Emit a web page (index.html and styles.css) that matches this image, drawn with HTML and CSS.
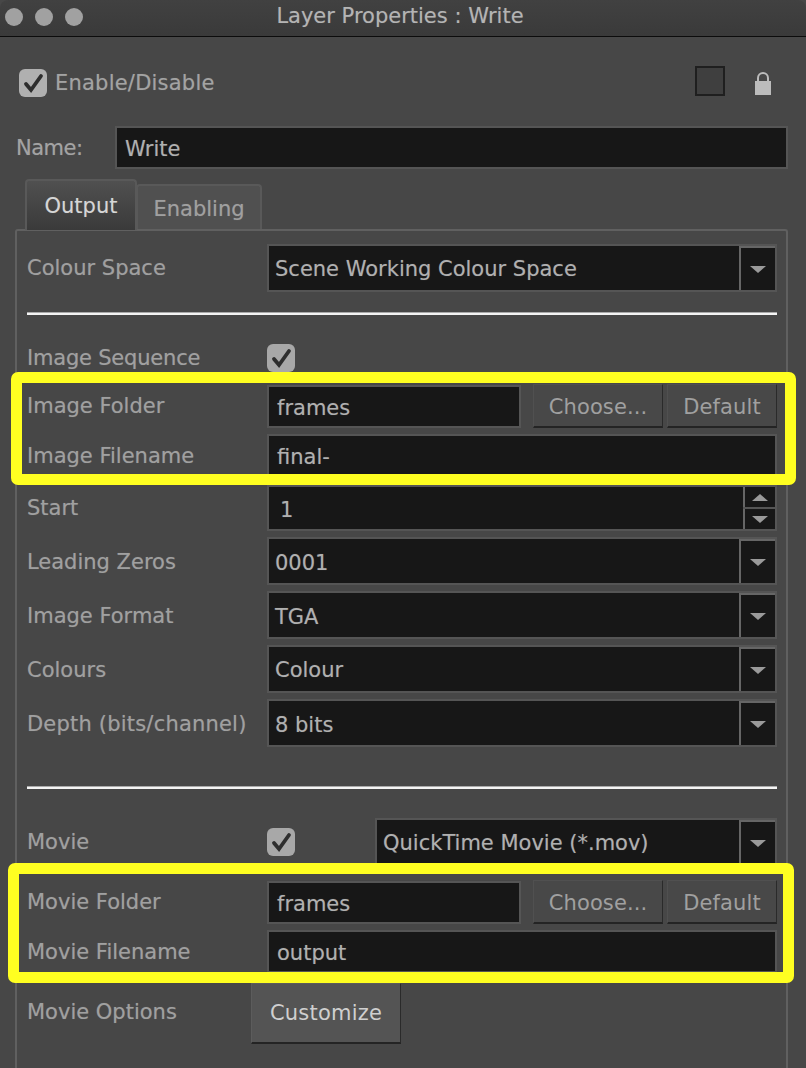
FILE: index.html
```html
<!DOCTYPE html>
<html lang="en">
<head>
<meta charset="utf-8">
<title>Layer Properties : Write</title>
<link rel="stylesheet" href="styles.css">
</head>
<body>
<div class="window">
  <header class="titlebar">
    <div class="lights"><span class="light"></span><span class="light"></span><span class="light"></span></div>
    <div class="title">Layer Properties : Write</div>
  </header>
  <div class="enable-row">
    <span class="check check-main"><svg viewBox="0 0 28 28"><path d="M7 15 L12 21 L22 7" fill="none" stroke="#2e2e2e" stroke-width="3.8" stroke-linecap="round"/></svg></span>
    <span class="enable-label">Enable/Disable</span>
    <span class="colour-swatch"></span>
    <svg class="lock" viewBox="0 0 18 24"><path d="M4 11 V7 a5 5 0 0 1 10 0 V11" fill="none" stroke="#bcbcbc" stroke-width="2"/><rect x="1" y="10" width="16" height="14" fill="#bcbcbc"/></svg>
  </div>
  <div class="name-row">
    <span class="name-label">Name:</span>
    <div class="field name-field">Write</div>
  </div>
  <div class="tabs">
    <div class="tab tab-active">Output</div>
    <div class="tab tab-idle">Enabling</div>
  </div>
  <section class="panel">
    <div class="row row-select">
      <span class="label">Colour Space</span>
      <div class="field combo combo-high"><span class="combo-text">Scene Working Colour Space</span><span class="arrow"><i class="tri-down"></i></span></div>
    </div>
    <div class="rule rule-first"></div>
    <div class="row row-check">
      <span class="label label-tight">Image Sequence</span>
      <span class="check"><svg viewBox="0 0 28 28"><path d="M7 15 L12 21 L22 7" fill="none" stroke="#2e2e2e" stroke-width="3.8" stroke-linecap="round"/></svg></span>
    </div>
    <div class="group group-image">
      <div class="row row-path">
        <span class="label">Image Folder</span>
        <div class="field path">frames</div>
        <button class="btn btn-choose">Choose...</button>
        <button class="btn btn-default">Default</button>
      </div>
      <div class="row row-file">
        <span class="label">Image Filename</span>
        <div class="field wide">final-</div>
      </div>
      <div class="marker marker-image"></div>
    </div>
    <div class="row row-start">
      <span class="label">Start</span>
      <div class="field combo"><span class="combo-text start-text">1</span>
        <span class="spin"><span class="spin-btn"><i class="tri-up"></i></span><span class="spin-btn"><i class="tri-down"></i></span></span>
      </div>
    </div>
    <div class="row row-select row-gap">
      <span class="label">Leading Zeros</span>
      <div class="field combo"><span class="combo-text">0001</span><span class="arrow"><i class="tri-down"></i></span></div>
    </div>
    <div class="row row-select row-gap">
      <span class="label">Image Format</span>
      <div class="field combo"><span class="combo-text">TGA</span><span class="arrow"><i class="tri-down"></i></span></div>
    </div>
    <div class="row row-select row-gap">
      <span class="label">Colours</span>
      <div class="field combo combo-high"><span class="combo-text">Colour</span><span class="arrow"><i class="tri-down"></i></span></div>
    </div>
    <div class="row row-select row-gap">
      <span class="label label-wide">Depth (bits/channel)</span>
      <div class="field combo"><span class="combo-text">8 bits</span><span class="arrow"><i class="tri-down"></i></span></div>
    </div>
    <div class="rule rule-second"></div>
    <div class="row row-movie">
      <span class="label">Movie</span>
      <span class="check"><svg viewBox="0 0 28 28"><path d="M7 15 L12 21 L22 7" fill="none" stroke="#2e2e2e" stroke-width="3.8" stroke-linecap="round"/></svg></span>
      <div class="field combo combo-high movie-combo"><span class="combo-text">QuickTime Movie (*.mov)</span><span class="arrow"><i class="tri-down"></i></span></div>
    </div>
    <div class="group group-movie">
      <div class="row row-path">
        <span class="label">Movie Folder</span>
        <div class="field path">frames</div>
        <button class="btn btn-choose">Choose...</button>
        <button class="btn btn-default">Default</button>
      </div>
      <div class="row row-file">
        <span class="label">Movie Filename</span>
        <div class="field wide">output</div>
      </div>
      <div class="marker marker-movie"></div>
    </div>
    <div class="row row-options">
      <span class="label options-label">Movie Options</span>
      <button class="customize">Customize</button>
    </div>
  </section>
</div>
</body>
</html>
```
FILE: styles.css
```css
* { box-sizing: border-box; }
html, body { margin: 0; padding: 0; height: 100%; overflow: hidden; background: #474747; }
body { font-family: "DejaVu Sans", "Liberation Sans", sans-serif; font-size: 21px; color: #a3a3a3; text-shadow: 0 0 1px rgba(170, 170, 170, .4); }
.window { width: 806px; height: 1068px; background: #474747; overflow: hidden; }

.titlebar { height: 37px; display: flex; align-items: center; position: relative; padding-bottom: 2px; border-radius: 8px 8px 0 0; background: linear-gradient(#414141, #3a3a3a); border-bottom: 1px solid #0c0c0c; }
.lights { display: flex; gap: 12px; padding-left: 5px; }
.light { width: 18px; height: 18px; border-radius: 50%; background: #a1a1a1; }
.title { position: absolute; left: 0; right: 6px; top: 0; text-align: center; font-size: 21px; color: #b4b4b4; line-height: 32px; }

.enable-row { display: flex; align-items: center; height: 30px; margin-top: 29px; padding-left: 19px; }
.check { width: 28px; height: 28px; border-radius: 6px; background: #a8a8a8; flex: none; display: block; }
.check svg { display: block; width: 28px; height: 28px; }
.check-main { background: #b0b0b0; margin-top: 4px; }
.enable-label { margin-left: 8px; margin-top: 4px; letter-spacing: .22px; width: 159px; flex: none; }
.colour-swatch { width: 30px; height: 30px; margin-left: 481px; margin-top: -1px; border: 2px solid #1f1f1f; background: #3f3f3f; flex: none; }
.lock { width: 18px; height: 24px; margin-left: 29px; margin-top: 4px; flex: none; }

.name-row { display: flex; align-items: center; height: 43px; margin-top: 30px; padding-left: 16px; }
.name-label { width: 99px; letter-spacing: -.5px; margin-top: 1px; }
.name-field { width: 673px; height: 43px; padding-left: 8px; }

.field { background: #171717; border: 2px solid #555; padding-top: 3px; color: #b0b0b0; display: flex; align-items: center; flex: none; }

.tabs { display: flex; height: 52px; margin-top: 8px; padding-left: 25px; align-items: flex-end; position: relative; }
.tab { display: flex; align-items: center; justify-content: center; border: 2px solid #595959; border-bottom: none; border-radius: 4px 4px 0 0; }
.tab-active { width: 112px; height: 51px; color: #d6d6d6; background: linear-gradient(#505050, #3a3a3a); margin-bottom: -1px; position: relative; }
.tab-idle { width: 126px; height: 45px; background: #505050; color: #a0a0a0; margin-left: -1px; padding-top: 2px; }

.panel { margin-left: 15px; width: 773px; height: 900px; border: 2px solid #606060; border-bottom: none; border-radius: 3px 3px 0 0; padding: 13px 9px 0 10px; }
.row { display: flex; align-items: center; }
.label { width: 240px; flex: none; color: #a0a0a0; }
.label-wide { letter-spacing: .2px; white-space: nowrap; }
.label-tight { letter-spacing: -.2px; }
.row-select { height: 48px; }
.row-gap { margin-top: 6px; }
.row-gap .label { padding-top: 2px; }
.combo { width: 510px; height: 100%; position: relative; }
.combo-high { padding-top: 1px; }
.combo-text { padding-left: 6px; }
.start-text { padding-left: 11px; }
.arrow { position: absolute; right: 0; top: 0; bottom: 0; width: 36px; border-left: 2px solid #666; border-top: 2px solid #666; display: flex; align-items: center; justify-content: center; background: #171717; }
.tri-down { display: block; width: 0; height: 0; border-left: 8px solid transparent; border-right: 8px solid transparent; border-top: 7px solid #9a9a9a; }
.tri-up { display: block; width: 0; height: 0; border-left: 8px solid transparent; border-right: 8px solid transparent; border-bottom: 7px solid #9a9a9a; }

.rule { height: 3px; background: linear-gradient(#aaa 33%, #f4f4f4 33%); width: 750px; }
.rule-first { margin-top: 20px; }
.rule-second { margin-top: 39px; }

.row-check { height: 28px; margin-top: 29px; }
.group { position: relative; }
.group-image { margin-top: 12px; }
.row-path { height: 44px; }
.path { width: 254px; height: 43px; padding-left: 8px; }
.btn { height: 44px; flex: none; font: inherit; letter-spacing: .1px; color: #a0a0a0; background: #484848; border: 1px solid #505050; border-right-color: #2a2a2a; border-bottom: 2px solid #242424; padding: 3px 0 0; }
.btn-choose { width: 130px; margin-left: 12px; }
.btn-default { width: 110px; margin-left: 4px; }
.row-file { height: 43px; margin-top: 6px; }
.wide { width: 510px; height: 43px; padding-left: 8px; }
.marker { position: absolute; border: 11px solid #ffff21; border-radius: 7px; pointer-events: none; }
.marker-image { left: -16px; right: -19px; top: -12px; height: 113px; }
.marker-movie { left: -19px; right: -17px; top: -17px; height: 120px; }

.row-start { height: 46px; margin-top: 8px; }
.spin { position: absolute; right: 0; top: 0; bottom: 0; width: 32px; display: flex; flex-direction: column; gap: 2px; background: #555; }
.spin-btn { flex: 1; background: #171717; border-left: 2px solid #666; display: flex; align-items: center; justify-content: center; }

.row-movie { height: 48px; margin-top: 29px; }
.movie-combo { width: 402px; margin-left: 80px; }
.group-movie { margin-top: 14px; }
.row-options { margin-top: 10px; height: 61px; align-items: flex-start; }
.options-label { width: 224px; margin-top: 17px; }
.customize { width: 150px; height: 61px; font: inherit; letter-spacing: .2px; color: #cfcfcf; background: #545454; border: 1px solid #5c5c5c; border-right-color: #2a2a2a; border-bottom: 2px solid #242424; padding: 0; }
```
